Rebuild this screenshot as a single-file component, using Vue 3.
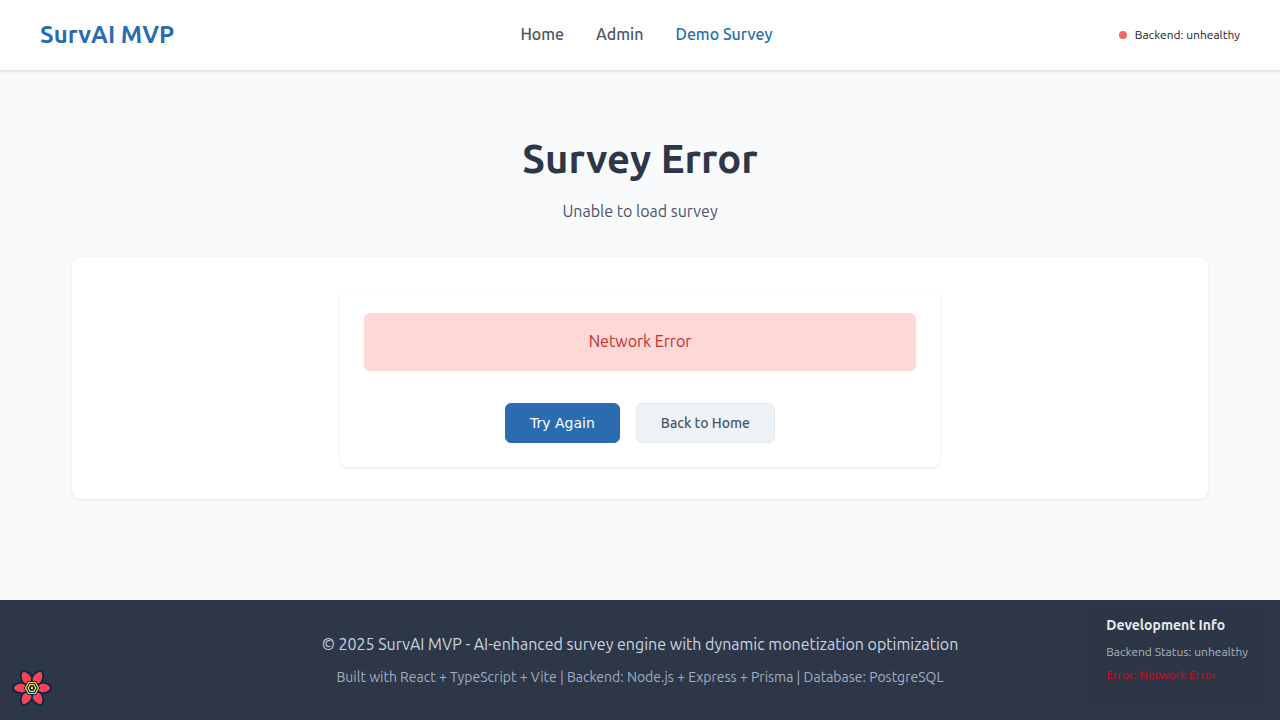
<script setup>
import { ref } from 'vue'

const status = ref('unhealthy')
const error = ref('Network Error')
const links = [
  { label: 'Home', active: false },
  { label: 'Admin', active: false },
  { label: 'Demo Survey', active: true },
]
const petals = [0, 60, 120, 180, 240, 300]
</script>

<template>
  <div class="layout">
    <header class="header">
      <a class="brand" href="#">SurvAI MVP</a>
      <nav class="nav">
        <a v-for="l in links" :key="l.label" href="#" :class="{ active: l.active }">{{ l.label }}</a>
      </nav>
      <div class="status"><span class="dot"></span><span>Backend: {{ status }}</span></div>
    </header>

    <main class="main">
      <h1>Survey Error</h1>
      <p class="subtitle">Unable to load survey</p>
      <section class="panel">
        <div class="card">
          <div class="alert" role="alert">{{ error }}</div>
          <div class="actions">
            <button type="button" class="btn primary">Try Again</button>
            <a class="btn secondary" href="#">Back to Home</a>
          </div>
        </div>
      </section>
    </main>

    <footer class="footer">
      <p class="copy">© 2025 SurvAI MVP - AI-enhanced survey engine with dynamic monetization optimization</p>
      <p class="stack">Built with React + TypeScript + Vite | Backend: Node.js + Express + Prisma | Database: PostgreSQL</p>
    </footer>

    <aside class="dev">
      <h4>Development Info</h4>
      <p>Backend Status: {{ status }}</p>
      <p class="dev-error">Error: {{ error }}</p>
    </aside>

    <button type="button" class="query" aria-label="Open query devtools">
      <svg viewBox="-20 -20 40 40" width="40" height="40">
        <g fill="#ff4154" stroke="#002c4b" stroke-width="1.8" stroke-linejoin="round">
          <path v-for="a in petals" :key="a" :transform="`rotate(${a})`" d="M6 -3.800 L9.500 -5.300 C14 -5.300 19 -3 19 0 C19 3 14 5.300 9.500 5.300 L6 3.800 Z" />
        </g>
        <g fill="#002c4b" stroke="#ffd94c" stroke-width="1.2" stroke-linejoin="round">
          <path d="M-7.500 0 L-3.800 -6.300 H3.800 L7.500 0 L3.800 6.300 H-3.800 Z" stroke="#002c4b" />
          <path d="M-6.500 0 L-3.300 -5.500 H3.300 L6.500 0 L3.300 5.500 H-3.300 Z" />
          <path d="M-3.900 0 L-2 -3.300 H2 L3.900 0 L2 3.300 H-2 Z" />
          <circle r="1.200" fill="#ffd94c" stroke="none" />
        </g>
      </svg>
    </button>
  </div>
</template>

<style>
body {
  margin: 0;
  background: #f9fafc;
}
</style>

<style scoped>
.layout {
  min-height: 100vh;
  display: flex;
  flex-direction: column;
  font-family: Ubuntu, "Noto Sans", sans-serif;
  font-size: 16px;
  line-height: 1.6;
  color: #2d3748;
}
h1, h4, p { margin: 0; }
a { text-decoration: none; }
.header {
  display: flex;
  align-items: center;
  justify-content: space-between;
  height: 70px;
  padding: 0 40px;
  background: #fff;
  border-bottom: 1px solid #e2e8f0;
  box-shadow: 0 1px 3px rgba(0, 0, 0, 0.1);
}
.brand {
  font-size: 24px;
  font-weight: 600;
  color: #2b6cb0;
}
.nav { display: flex; gap: 32px; }
.nav a { color: #4a5568; font-weight: 500; }
.nav a.active { color: #2b6cb0; }
.status {
  display: flex;
  align-items: center;
  gap: 8px;
  font-size: 12px;
  line-height: 20px;
  color: #1a202c;
}
.dot {
  width: 8px;
  height: 8px;
  border-radius: 50%;
  background: #f56565;
}
.main {
  flex: 1;
  box-sizing: border-box;
  width: 100%;
  max-width: 1200px;
  margin: 0 auto;
  padding: 64px 32px;
  text-align: center;
}
h1 {
  margin-bottom: 16px;
  font-size: 40px;
  line-height: 48px;
  font-weight: 700;
}
.subtitle { margin-bottom: 32px; color: #4a5568; }
.panel {
  padding: 32px;
  background: #fff;
  border-radius: 8px;
  box-shadow: 0 1px 3px rgba(0, 0, 0, 0.1);
}
.card {
  box-sizing: border-box;
  max-width: 600px;
  margin: 0 auto;
  padding: 24px;
  border-radius: 8px;
  box-shadow: 0 1px 3px rgba(0, 0, 0, 0.1);
}
.alert {
  box-sizing: border-box;
  min-height: 58px;
  margin-bottom: 32px;
  padding: 16px;
  background: #fed7d7;
  color: #c53030;
  border-radius: 6px;
}
.actions {
  display: flex;
  justify-content: center;
  gap: 16px;
}
.btn {
  box-sizing: border-box;
  height: 40px;
  padding: 0 24px;
  border: 1px solid transparent;
  border-radius: 6px;
  font-size: 14px;
  line-height: 38px;
  font-weight: 500;
}
.primary {
  font-family: "DejaVu Sans", sans-serif;
  color: #fff;
  background: #2b6cb0;
  border-color: #2b6cb0;
}
.secondary {
  color: #4a5568;
  background: #edf2f7;
  border-color: #e2e8f0;
}
.footer {
  padding: 32px;
  background: #2d3748;
  text-align: center;
}
.copy { margin-bottom: 8px; color: #cbd5e0; }
.stack { font-size: 14px; color: #a0aec0; }
.dev {
  position: fixed;
  right: 16px;
  bottom: 16px;
  padding: 8px 16px 16px;
  background: #2d3647;
  border-radius: 6px;
  font-size: 12px;
  color: #abb2be;
}
.dev h4 { font-size: 14px; line-height: 26px; font-weight: 600; color: #e8eaed; margin-bottom: 4px; }
.dev p { line-height: 19px; margin-bottom: 4px; }
.dev .dev-error { color: #e00010; }
.query {
  position: fixed;
  left: 12px;
  bottom: 12px;
  padding: 0;
  border: 0;
  background: none;
}
.query svg { display: block; }
</style>
